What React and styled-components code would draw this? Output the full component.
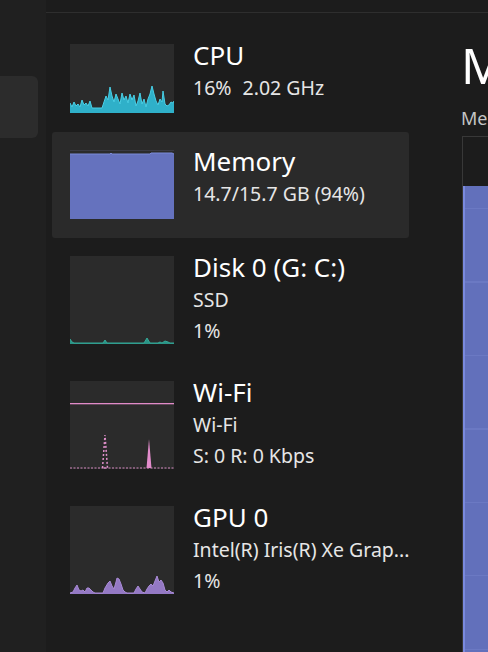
import React from 'react';
import styled, { createGlobalStyle } from 'styled-components';

const GlobalStyle = createGlobalStyle`
  html, body {
    margin: 0;
    padding: 0;
    background: #1c1c1c;
  }
  body {
    font-family: "Segoe UI", "Noto Sans", "Open Sans", sans-serif;
    color: #fff;
  }
  #root {
    height: 652px;
    overflow: hidden;
  }
`;

const Shell = styled.div`
  display: flex;
  height: 652px;
  overflow: hidden;
`;

const Sidebar = styled.nav`
  width: 46px;
  flex-shrink: 0;
  background: #202020;
  padding-top: 76px;
  box-sizing: border-box;
`;

const NavPill = styled.div`
  width: 38px;
  height: 62px;
  background: #2c2c2c;
  border-radius: 0 6px 6px 0;
`;

const Main = styled.main`
  flex: 1;
  display: flex;
  flex-direction: column;
  min-width: 0;
`;

const TopBar = styled.div`
  height: 12px;
  border-bottom: 1px solid #2e2e2e;
  flex-shrink: 0;
`;

const Body = styled.div`
  display: flex;
  flex: 1;
  min-height: 0;
`;

const List = styled.div`
  width: 363px;
  flex-shrink: 0;
  padding: 13px 0 0 6px;
  box-sizing: border-box;
  display: flex;
  flex-direction: column;
`;

const Row = styled.div`
  display: flex;
  align-items: flex-start;
  gap: 19px;
  padding: 18px 18px 19px;
  border-radius: 3px;
  background: ${p => (p.$selected ? '#2a2a2a' : 'transparent')};
`;

const Thumb = styled.div`
  width: 104px;
  height: ${p => p.$h}px;
  flex-shrink: 0;
  background: #2b2b2b;
  svg {
    display: block;
  }
`;

const Info = styled.div`
  margin: -6px 0 -10px;
  display: flex;
  flex-direction: column;
  white-space: nowrap;
`;

const Title = styled.div`
  font-size: 26px;
  line-height: 34px;
  color: #ffffff;
`;

const Sub = styled.div`
  font-size: 19.5px;
  line-height: 31px;
  color: #e6e6e6;
  span + span {
    margin-left: 11px;
  }
`;

const Detail = styled.section`
  flex: 1;
  padding: 28px 0 0 52px;
  min-width: 0;
  white-space: nowrap;
`;

const Heading = styled.h1`
  margin: 0;
  font-size: 49px;
  line-height: 49px;
  font-weight: 400;
`;

const Caption = styled.div`
  margin-top: 16px;
  font-size: 18px;
  line-height: 24px;
  color: #c4c4c4;
`;

const Chart = styled.div`
  margin-top: 6px;
  margin-left: 1px;
  height: 560px;
  border: 1px solid #383838;
  border-right: none;
  display: flex;
  flex-direction: column;
`;

const ChartEmpty = styled.div`
  height: 49px;
`;

const ChartFill = styled.div`
  flex: 1;
  background-color: #6270bb;
  border-left: 2px solid #7a8ade;
  background-image: repeating-linear-gradient(
    to bottom,
    transparent 0,
    transparent 22px,
    #6b79c3 22px,
    #6b79c3 23px,
    transparent 23px,
    transparent 73.5px
  );
`;

const cpuPts = [
  [0, 59], [2, 63], [4, 58], [6, 62], [8, 60], [10, 63], [12, 56], [14, 61], [16, 59],
  [18, 62], [20, 57], [22, 64], [32, 64], [34, 58], [36, 52], [38, 56], [40, 43], [42, 52],
  [44, 58], [46, 50], [48, 55], [50, 60], [52, 49], [54, 56], [56, 52], [58, 59], [60, 50],
  [62, 56], [64, 51], [66, 62], [68, 57], [70, 49], [72, 60], [74, 55], [76, 63], [78, 55],
  [80, 50], [82, 42], [84, 50], [86, 57], [88, 61], [90, 55], [92, 58], [93, 47], [95, 60],
  [97, 62], [99, 61], [101, 58], [103, 59], [104, 57],
];

const gpuPts = [
  [0, 87], [3, 86], [5, 82], [7, 79], [9, 84], [11, 85], [13, 84], [15, 86], [17, 82],
  [19, 82], [21, 84], [23, 86], [25, 87], [33, 87], [35, 82], [38, 77], [40, 75], [42, 80],
  [44, 83], [46, 76], [47, 72], [49, 73], [51, 78], [53, 84], [55, 86], [57, 87], [64, 87],
  [66, 83], [68, 80], [70, 83], [72, 86], [75, 87], [77, 83], [79, 80], [81, 78], [83, 80],
  [85, 75], [87, 70], [89, 76], [91, 74], [93, 77], [95, 84], [97, 86], [99, 84], [101, 86],
  [104, 87],
];

const diskPts = [
  [0, 83], [2, 86], [4, 87], [33, 87], [35, 84], [37, 87], [74, 87], [77, 82], [80, 87],
  [88, 87], [90, 86], [92, 87], [95, 85], [98, 86], [100, 87], [104, 87],
];

const areaPath = (pts, h) =>
  `M0 ${h} ` + pts.map(([x, y]) => `L${x} ${y}`).join(' ') + ` L104 ${h} Z`;
const linePath = pts => pts.map(([x, y], i) => `${i ? 'L' : 'M'}${x} ${y}`).join(' ');

function AreaGraph({ pts, h, fill, stroke }) {
  return (
    <svg width="104" height={h} viewBox={`0 0 104 ${h}`}>
      <path d={areaPath(pts, h)} fill={fill} />
      <path d={linePath(pts)} fill="none" stroke={stroke} strokeWidth="1" />
    </svg>
  );
}

function MemoryGraph() {
  return (
    <svg width="104" height="69" viewBox="0 0 104 69">
      <line x1="0" y1="0.5" x2="104" y2="0.5" stroke="#3a3a44" />
      <path d="M0 69 L0 4 L40 4 L41 3 L42 4 L80 4 L81 3 L102 3 L104 4 L104 69 Z" fill="#6572be" />
      <path d="M0 4 L40 4 L41 3 L42 4 L80 4 L81 3 L102 3 L104 4" fill="none" stroke="#7b8ad8" />
    </svg>
  );
}

function WifiGraph() {
  return (
    <svg width="104" height="88" viewBox="0 0 104 88">
      <rect x="0" y="22" width="104" height="1.3" fill="#e18bc9" />
      <line x1="0" y1="87" x2="104" y2="87" stroke="#d58cc2" strokeWidth="1.2" strokeDasharray="2 1.5" />
      <path d="M32.5 87 L35 54 L37.5 87 Z" fill="none" stroke="#e08fcb" strokeWidth="1.5" strokeDasharray="2 2" />
      <path d="M76.5 87 L79 58 L81.5 87 Z" fill="#e38ccc" />
    </svg>
  );
}

const rows = [
  {
    title: 'CPU',
    lines: [['16%', '2.02 GHz']],
    h: 69,
    graph: <AreaGraph pts={cpuPts} h={69} fill="#2fb0c9" stroke="#48cfe6" />,
  },
  {
    title: 'Memory',
    lines: [['14.7/15.7 GB (94%)']],
    h: 69,
    selected: true,
    graph: <MemoryGraph />,
  },
  {
    title: 'Disk 0 (G: C:)',
    lines: [['SSD'], ['1%']],
    h: 88,
    graph: <AreaGraph pts={diskPts} h={88} fill="#2a9486" stroke="#35a797" />,
  },
  {
    title: 'Wi-Fi',
    lines: [['Wi-Fi'], ['S: 0 R: 0 Kbps']],
    h: 88,
    graph: <WifiGraph />,
  },
  {
    title: 'GPU 0',
    lines: [['Intel(R) Iris(R) Xe Grap...'], ['1%']],
    h: 88,
    graph: <AreaGraph pts={gpuPts} h={88} fill="#9479c4" stroke="#a98ad6" />,
  },
];

export default function App() {
  return (
    <>
      <GlobalStyle />
      <Shell>
        <Sidebar>
          <NavPill />
        </Sidebar>
        <Main>
          <TopBar />
          <Body>
            <List>
              {rows.map(r => (
                <Row key={r.title} $selected={r.selected}>
                  <Thumb $h={r.h}>{r.graph}</Thumb>
                  <Info>
                    <Title>{r.title}</Title>
                    {r.lines.map((parts, i) => (
                      <Sub key={i}>
                        {parts.map(t => (
                          <span key={t}>{t}</span>
                        ))}
                      </Sub>
                    ))}
                  </Info>
                </Row>
              ))}
            </List>
            <Detail>
              <Heading>Memory</Heading>
              <Caption>Memory usage</Caption>
              <Chart>
                <ChartEmpty />
                <ChartFill />
              </Chart>
            </Detail>
          </Body>
        </Main>
      </Shell>
    </>
  );
}
